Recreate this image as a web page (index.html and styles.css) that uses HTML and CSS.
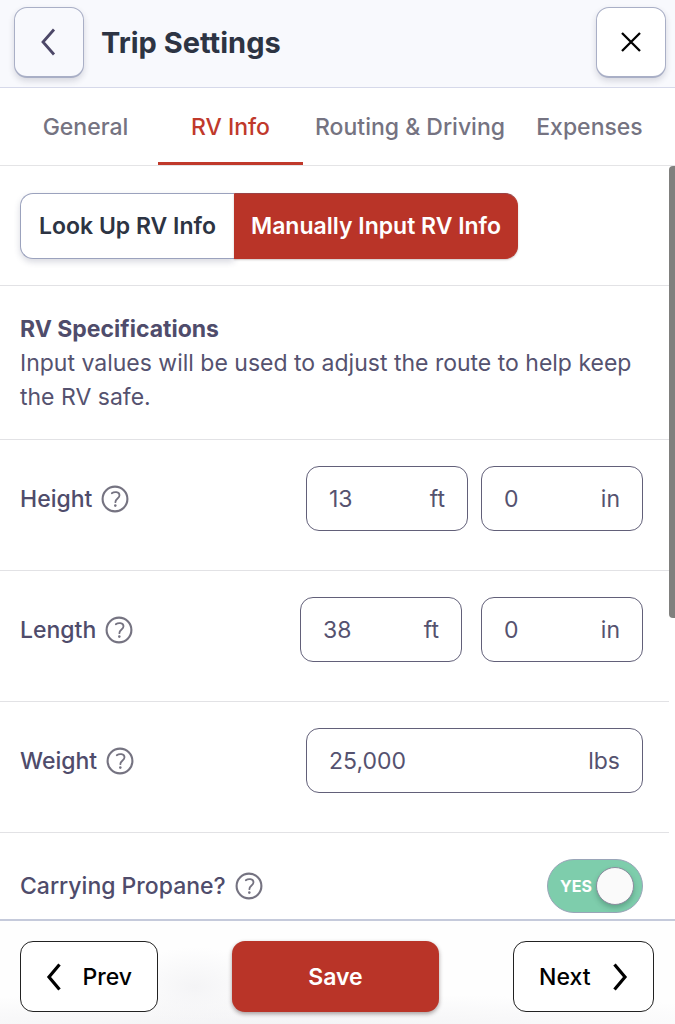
FILE: index.html
```html
<!DOCTYPE html>
<html lang="en">
<head>
<meta charset="utf-8">
<meta name="viewport" content="width=device-width, initial-scale=1">
<title>Trip Settings</title>
<link rel="stylesheet" href="styles.css">
</head>
<body>
<svg class="sprite" aria-hidden="true">
  <symbol id="help" viewBox="0 0 28 28">
    <circle cx="14" cy="14" r="12.4" fill="none" stroke="#757381" stroke-width="2.100"/>
    <path d="M10.800 8.200C13 6.600 18.500 6.400 18.500 10.300C18.500 13.600 14.400 13.400 14.400 17.200" fill="none" stroke="#757381" stroke-width="1.800" stroke-linecap="round"/>
    <circle cx="14.300" cy="20.600" r="1.300" fill="#757381"/>
  </symbol>
</svg>
<header class="header">
  <button class="square-btn back" type="button" aria-label="Back">
    <svg width="16" height="30" viewBox="0 0 16 30"><path d="M13 2.500L2 15L13 27.500" fill="none" stroke="#4d4868" stroke-width="2.800"/></svg>
  </button>
  <h1 class="title">Trip Settings</h1>
  <button class="square-btn close" type="button" aria-label="Close">
    <svg width="22" height="22" viewBox="0 0 22 22"><path d="M2 2L20 20M20 2L2 20" fill="none" stroke="#000" stroke-width="2.300"/></svg>
  </button>
</header>
<nav class="tabs">
  <a class="tab" href="#general">General</a>
  <a class="tab active" href="#rv" aria-current="page">RV Info</a>
  <a class="tab" href="#routing">Routing &amp; Driving</a>
  <a class="tab" href="#expenses">Expenses</a>
</nav>
<div class="body">
  <main class="content">
    <section class="section modes">
      <div class="segmented">
        <button class="segment" type="button">Look Up RV Info</button>
        <button class="segment selected" type="button">Manually Input RV Info</button>
      </div>
    </section>
    <section class="section intro">
      <h2 class="subtitle">RV Specifications</h2>
      <p class="text">Input values will be used to adjust the route to help keep the RV safe.</p>
    </section>
    <section class="section row">
      <div class="name"><label for="height">Height</label><svg class="help"><use href="#help"/></svg></div>
      <div class="fields">
        <div class="field"><input class="value" id="height" value="13"><span class="unit">ft</span></div>
        <div class="field"><input class="value" aria-label="Height, inches" value="0"><span class="unit">in</span></div>
      </div>
    </section>
    <section class="section row">
      <div class="name"><label for="length">Length</label><svg class="help"><use href="#help"/></svg></div>
      <div class="fields wide-gap">
        <div class="field"><input class="value" id="length" value="38"><span class="unit">ft</span></div>
        <div class="field"><input class="value" aria-label="Length, inches" value="0"><span class="unit">in</span></div>
      </div>
    </section>
    <section class="section row">
      <div class="name"><label for="weight">Weight</label><svg class="help"><use href="#help"/></svg></div>
      <div class="fields">
        <div class="field wide"><input class="value" id="weight" value="25,000"><span class="unit">lbs</span></div>
      </div>
    </section>
    <section class="section row">
      <div class="name short"><label for="propane">Carrying Propane?</label><svg class="help"><use href="#help"/></svg></div>
      <label class="switch"><input class="switch-input" type="checkbox" id="propane" checked><span class="switch-text">YES</span><span class="knob"></span></label>
    </section>
  </main>
  <div class="rail"><div class="thumb"></div></div>
</div>
<footer class="footer">
  <button class="nav-btn prev" type="button"><svg width="16" height="30" viewBox="0 0 16 30"><path d="M13.500 2.500L3 15L13.500 27.500" fill="none" stroke="#000" stroke-width="3.200"/></svg>Prev</button>
  <button class="save" type="button">Save</button>
  <button class="nav-btn next" type="button">Next<svg width="16" height="30" viewBox="0 0 16 30"><path d="M2.500 2.500L13 15L2.500 27.500" fill="none" stroke="#000" stroke-width="3.200"/></svg></button>
</footer>
</body>
</html>
```
FILE: styles.css
```css
* { box-sizing: border-box; }
body {
  margin: 0;
  height: 100vh;
  display: flex;
  flex-direction: column;
  overflow: hidden;
  background: #fff;
  color: #55526f;
  font: 400 23px/34px Inter, "Liberation Sans", sans-serif;
}
button, input { font: inherit; color: inherit; margin: 0; }
svg { flex: none; }
.sprite { position: absolute; width: 0; height: 0; }
.header {
  flex: none;
  display: flex;
  align-items: center;
  padding: 7px 9px 9px 14px;
  background: #f8f9fd;
  border-bottom: 1px solid #d6d9ea;
}
.square-btn {
  width: 70px;
  height: 71px;
  display: flex;
  align-items: center;
  justify-content: center;
  padding: 0;
  border: 1px solid #a9afc6;
  border-bottom-width: 2px;
  border-radius: 13px;
  background: #fff;
  box-shadow: 0 3px 6px rgba(40, 40, 60, 0.16);
}
.back { background: #f8f9fd; }
.title {
  flex: 1;
  margin: 0;
  padding-left: 17px;
  color: #2d3443;
  font-size: 29px;
  font-weight: 700;
}
.tabs {
  flex: none;
  display: flex;
  padding-left: 13px;
  border-bottom: 1px solid #e4e4e6;
}
.tab {
  min-width: 145px;
  padding: 22px 12px 18px;
  border-bottom: 3px solid transparent;
  color: #757381;
  font-weight: 450;
  text-align: center;
  text-decoration: none;
  white-space: nowrap;
}
.tab.active { color: #c0392b; border-bottom-color: #c0392b; }
.body { flex: 1; min-height: 0; display: flex; }
.content { flex: 1; overflow: hidden; }
.rail { width: 6px; flex: none; }
.thumb { height: 60%; border-radius: 4px 0 0 4px; background: #80807e; }
.section { padding: 26px 26px 26px 20px; border-bottom: 1px solid #e2e2e5; }
.modes { padding-top: 27px; }
.segmented { display: inline-flex; vertical-align: top; border-radius: 13px; }
.segment {
  height: 66px;
  padding: 0 18px;
  border: 1px solid #9ba2bd;
  border-right: 0;
  border-radius: 13px 0 0 13px;
  background: #fff;
  color: #2d3443;
  font-weight: 600;
  white-space: nowrap;
  box-shadow: 0 3px 6px rgba(60, 65, 100, 0.2);
}
.segment.selected {
  padding: 0 16px;
  border: 1px solid #b93428;
  border-top-color: #9a4245;
  border-radius: 0 13px 13px 0;
  background: #b93428;
  color: #fff;
  box-shadow: 0 1px 2px rgba(60, 30, 30, 0.25);
}
.subtitle { margin: 0; color: #4f4c6b; font-size: 23px; font-weight: 700; }
.text { margin: 0; }
.intro { padding-bottom: 25px; }
.row {
  min-height: 131px;
  display: flex;
  justify-content: space-between;
  align-items: flex-start;
}
.name { height: 65px; display: flex; align-items: center; gap: 9px; color: #4f4c6b; font-weight: 450; }
.name.short { height: 54px; }
.help { width: 28px; height: 28px; }
.fields { display: flex; gap: 13px; }
.wide-gap { gap: 19px; }
.field {
  width: 162px;
  height: 65px;
  display: flex;
  align-items: center;
  padding: 0 22px;
  border: 1px solid #626079;
  border-radius: 13px;
}
.field.wide { width: 337px; }
.value { flex: 1; min-width: 0; padding: 0; border: 0; outline: 0; background: none; }
.switch {
  width: 96px;
  height: 54px;
  display: flex;
  align-items: center;
  justify-content: space-between;
  padding: 0 8px 0 12px;
  border: 1px solid #9aa5b8;
  border-radius: 27px;
  background: #7ecdac;
}
.switch-input { position: absolute; opacity: 0; }
.switch-text { color: #fff; font-size: 16px; font-weight: 700; }
.knob {
  width: 38px;
  height: 38px;
  border: 1px solid #8c8c9f;
  border-radius: 50%;
  background: #fafafa;
  box-shadow: 0 3px 5px rgba(30, 80, 60, 0.3);
}
.footer {
  flex: none;
  display: flex;
  justify-content: space-between;
  padding: 20px 21px 12px 20px;
  border-top: 2px solid #c5cadb;
  background:
    radial-gradient(70px 40px at 195px 66px, #f4f4f6, transparent),
    radial-gradient(600px 36px at 260px 108px, #f2f2f4, transparent),
    #fefefe;
}
.nav-btn {
  width: 138px;
  height: 71px;
  display: flex;
  align-items: center;
  justify-content: space-between;
  padding: 0 25px;
  border: 1px solid #222;
  border-radius: 13px;
  background: #fff;
  color: #000;
  font-weight: 500;
}
.next { width: 141px; }
.save {
  width: 207px;
  height: 71px;
  border: 0;
  border-radius: 13px;
  background: #b93428;
  color: #fff;
  font-weight: 600;
  box-shadow: 0 2px 4px rgba(40, 20, 20, 0.4);
}
```
